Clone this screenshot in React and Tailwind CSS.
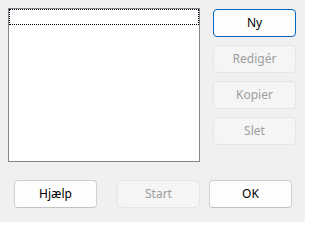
function Btn({ children, primary, disabled, className = "" }) {
  let look = "bg-[#fdfdfd] border-[#d0d0d0] border-b-[#c2c2c2] text-black";
  if (primary) look = "bg-[#fdfdfd] border-[#0067c0] text-black";
  if (disabled) look = "bg-[#f5f5f5] border-[#e5e5e5] text-[#9d9d9d]";
  return (
    <div
      className={`w-[83px] h-[28px] rounded-[4px] border flex items-center justify-center text-[12px] ${look} ${className}`}
    >
      {children}
    </div>
  );
}

export default function App() {
  return (
    <div
      className="w-[305px] h-[222px] bg-[#f0f0f0] overflow-hidden"
      style={{ fontFamily: '"Noto Sans", "Open Sans", sans-serif' }}
    >
      <div className="flex pt-[8px] pl-[8px]">
        <div className="w-[192px] h-[154px] bg-white border border-[#828790] p-0">
          <div className="h-[16px] border border-dotted border-black" />
        </div>
        <div className="ml-[13px] pt-[1px] flex flex-col gap-[8px]">
          <Btn primary>Ny</Btn>
          <Btn disabled>Redigér</Btn>
          <Btn disabled>Kopier</Btn>
          <Btn disabled>Slet</Btn>
        </div>
      </div>
      <div className="flex mt-[18px] pl-[14px]">
        <Btn>Hjælp</Btn>
        <Btn disabled className="ml-[20px]">Start</Btn>
        <Btn className="ml-[9px]">OK</Btn>
      </div>
    </div>
  );
}
